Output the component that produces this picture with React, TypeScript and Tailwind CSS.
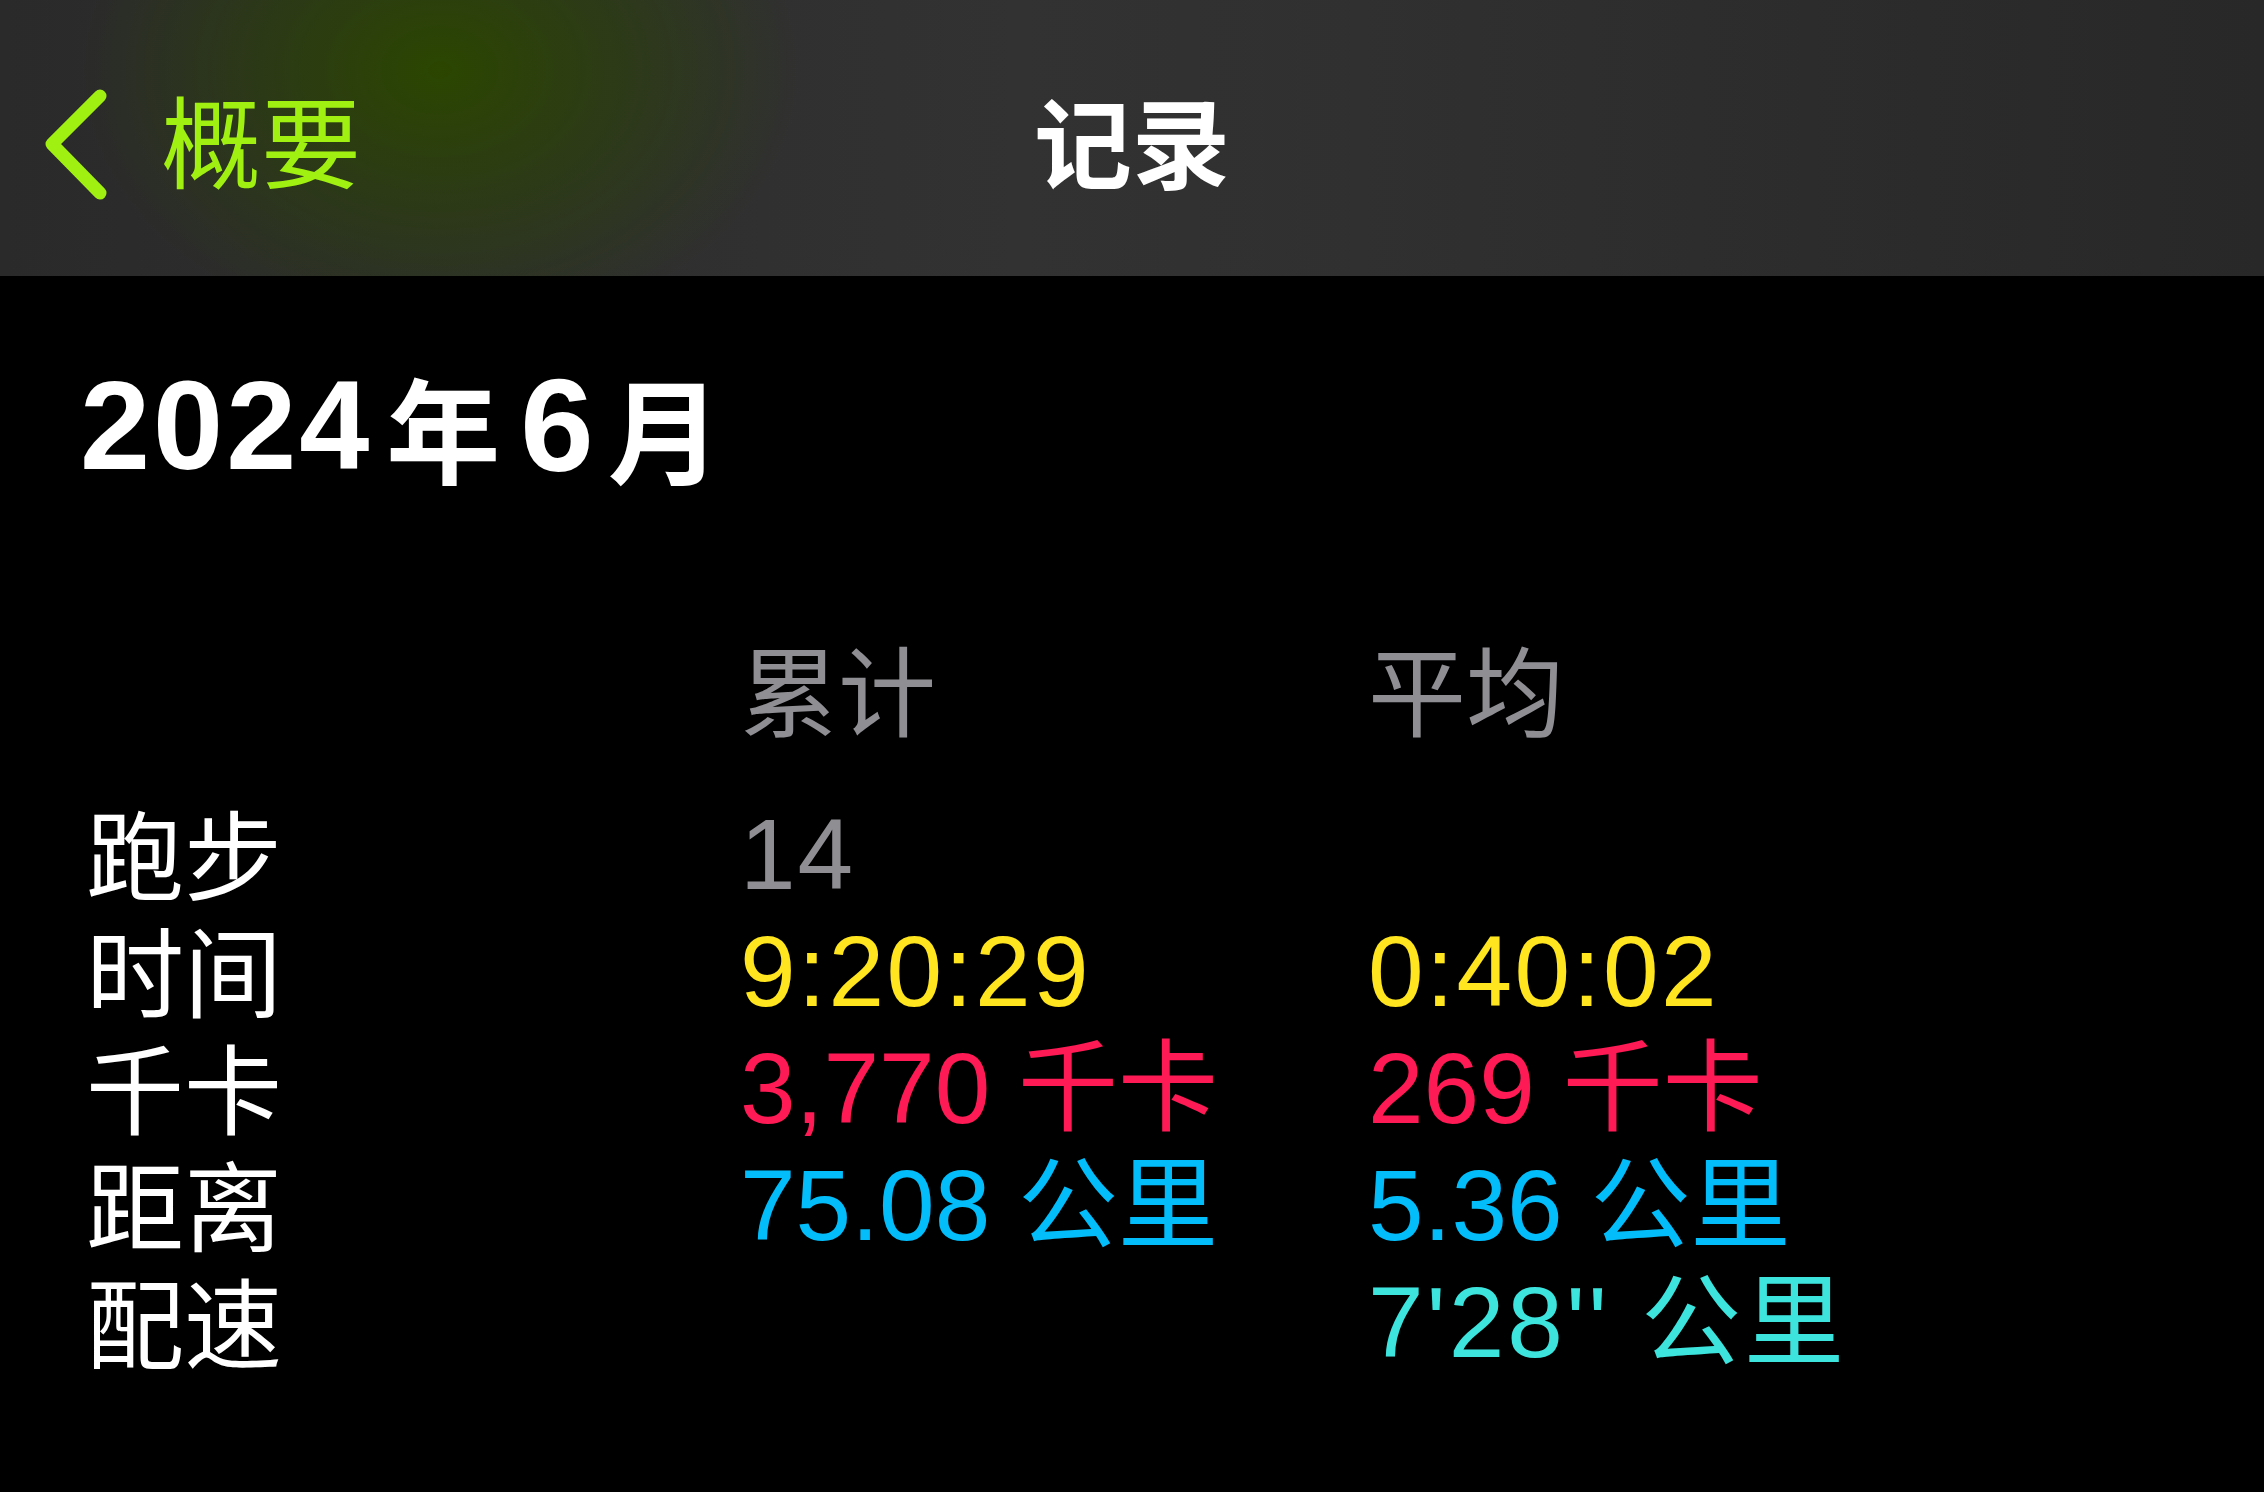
import React from "react";

type Row = {
  label: string;
  a: string;
  ac: string;
  b: string;
  bc: string;
};

const rows: Row[] = [
  { label: "跑步", a: "14", ac: "text-[#8e8e93] tracking-[2px]", b: "", bc: "" },
  { label: "时间", a: "9:20:29", ac: "text-[#fee51f] tracking-[2.5px]", b: "0:40:02", bc: "text-[#fee51f] tracking-[2.5px]" },
  { label: "千卡", a: "3,770 千卡", ac: "text-[#fe1a55]", b: "269 千卡", bc: "text-[#fe1a55]" },
  { label: "距离", a: "75.08 公里", ac: "text-[#02bdfa]", b: "5.36 公里", bc: "text-[#02bdfa]" },
  { label: "配速", a: "", ac: "", b: "7'28'' 公里", bc: "text-[#3de4de] tracking-[3px]" },
];

function Chevron() {
  return (
    <svg width="66" height="112" viewBox="0 0 66 112" fill="none" className="mt-[14px]">
      <path
        d="M58 7 L10 55 L58 104"
        stroke="#a0f012"
        strokeWidth="13"
        strokeLinecap="round"
        strokeLinejoin="round"
      />
    </svg>
  );
}

export default function App() {
  return (
    <div className='w-full h-[1492px] bg-black overflow-hidden font-["Liberation_Sans","Noto_Sans_CJK_SC",sans-serif]'>
      {/* Header */}
      <div className="h-[276px] w-full grid grid-cols-[1fr_auto_1fr] items-center bg-[image:radial-gradient(ellipse_360px_270px_at_440px_70px,#2b4600_0%,rgba(43,70,0,0.6)_40%,rgba(43,70,0,0)_100%),linear-gradient(90deg,#2a2a2a_0%,#323232_45%,#303030_60%,#282828_100%)]">
        <div className="flex items-center pl-[42px]">
          <Chevron />
          <span className="ml-[53px] text-[100px] leading-none text-[#a0f012] font-['Noto_Sans_CJK_SC',sans-serif]">
            概要
          </span>
        </div>
        <div className="text-[98px] leading-none font-bold text-white font-['Noto_Sans_CJK_SC',sans-serif]">
          记录
        </div>
        <div />
      </div>

      {/* Date */}
      <div className="mt-[87px] pl-[80px] h-[126px] flex items-center text-white font-bold">
        <span className="text-[126px] leading-none tracking-[3px] font-['Liberation_Sans',sans-serif]">2024</span>
        <span className="ml-[14px] text-[114px] leading-none font-['Noto_Sans_CJK_SC',sans-serif]">年</span>
        <span className="ml-[20px] text-[132px] leading-none font-['Liberation_Sans',sans-serif]">6</span>
        <span className="ml-[14px] text-[114px] leading-none font-['Noto_Sans_CJK_SC',sans-serif]">月</span>
      </div>

      {/* Table */}
      <div className="mt-[145px] pl-[86px] grid grid-cols-[654px_628px_1fr]">
        <div className="h-[117px] mb-[44px]" />
        <div className="h-[117px] mb-[44px] pb-[14px] flex items-center text-[98px] leading-none text-[#8e8e93] font-['Noto_Sans_CJK_SC',sans-serif]">
          累计
        </div>
        <div className="h-[117px] mb-[44px] pb-[14px] flex items-center text-[98px] leading-none text-[#8e8e93] font-['Noto_Sans_CJK_SC',sans-serif]">
          平均
        </div>
        {rows.map((r) => (
          <React.Fragment key={r.label}>
            <div className="h-[117px] pb-[8px] flex items-center text-[98px] leading-none text-white font-['Noto_Sans_CJK_SC',sans-serif]">
              {r.label}
            </div>
            <div className={`h-[117px] flex items-center text-[100px] leading-none whitespace-pre ${r.ac}`}>
              {r.a}
            </div>
            <div className={`h-[117px] flex items-center text-[100px] leading-none whitespace-pre ${r.bc}`}>
              {r.b}
            </div>
          </React.Fragment>
        ))}
      </div>
    </div>
  );
}
